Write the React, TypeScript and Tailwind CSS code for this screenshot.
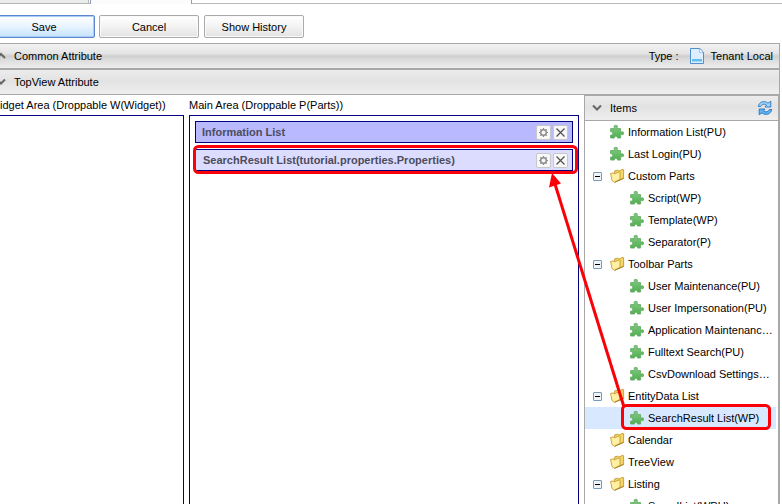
import React from "react";

type Row = { label: string; level: 1 | 2; kind: "part" | "folder"; open?: boolean; selected?: boolean };

const rows: Row[] = [
  { label: "Information List(PU)", level: 1, kind: "part" },
  { label: "Last Login(PU)", level: 1, kind: "part" },
  { label: "Custom Parts", level: 1, kind: "folder", open: true },
  { label: "Script(WP)", level: 2, kind: "part" },
  { label: "Template(WP)", level: 2, kind: "part" },
  { label: "Separator(P)", level: 2, kind: "part" },
  { label: "Toolbar Parts", level: 1, kind: "folder", open: true },
  { label: "User Maintenance(PU)", level: 2, kind: "part" },
  { label: "User Impersonation(PU)", level: 2, kind: "part" },
  { label: "Application Maintenanc…", level: 2, kind: "part" },
  { label: "Fulltext Search(PU)", level: 2, kind: "part" },
  { label: "CsvDownload Settings…", level: 2, kind: "part" },
  { label: "EntityData List", level: 1, kind: "folder", open: true },
  { label: "SearchResult List(WP)", level: 2, kind: "part", selected: true },
  { label: "Calendar", level: 1, kind: "folder" },
  { label: "TreeView", level: 1, kind: "folder" },
  { label: "Listing", level: 1, kind: "folder", open: true },
  { label: "SavedList(WPU)", level: 2, kind: "part" },
];

function Label({ text, bold }: { text: string; bold?: boolean }) {
  return <span className={"shrink-0 whitespace-nowrap " + (bold ? "font-bold text-[#4c4c5c]" : "")}>{text}</span>;
}

function Puzzle() {
  return (
    <svg width="16" height="16" viewBox="0 0 16 16" className="shrink-0">
      <defs>
        <linearGradient id="pz" x1="0" y1="0" x2="0" y2="1">
          <stop offset="0" stopColor="#86cb85" />
          <stop offset="1" stopColor="#4fae50" />
        </linearGradient>
      </defs>
      <path
        d="M.6 4.6H4.3V3.6Q3.3 1.3 5.7 1.3T7.2 3.6V4.6H10.6V8H11.5Q13.6 7.2 13.6 9.2T11.5 10.6H10.6V14H7.4V13.1Q7.2 12.2 5.9 12.2T4.5 13.1V14H.6V11.1H1.6Q2.7 10.7 2.7 9.4T1.6 7.7H.6Z"
        fill="url(#pz)"
        stroke="#65ad67"
        strokeWidth=".9"
      />
    </svg>
  );
}

function Folder() {
  return (
    <svg width="16" height="16" viewBox="0 0 16 16" className="shrink-0">
      <path d="M4.4 4.6L4.8 2.8 7.8 2.2 8.8 3.1 13 1.2 13.6 1.8V10.4L5 14Z" fill="#f3d568" stroke="#c3982e" strokeWidth=".9" />
      <path d="M.6 5.4L3.2 5 4.2 5.8 9.6 3.8 10 4.3V11.2L4.6 14.3 2 12.6Z" fill="#fff0a2" stroke="#c69c35" strokeWidth=".9" />
      <path d="M4.6 14.3L13.6 10.4" fill="none" stroke="#a87d22" strokeWidth=".9" />
    </svg>
  );
}

function Toggle() {
  return (
    <svg width="9" height="9" className="shrink-0">
      <rect x=".5" y=".5" width="8" height="8" rx=".5" fill="#edf5fa" stroke="#789bb3" />
      <path d="M2 4.5H7" stroke="#000" />
    </svg>
  );
}

function Chevron({ up }: { up?: boolean }) {
  return (
    <svg width="10" height="8" viewBox="0 0 10 8" className="shrink-0">
      <path d={up ? "M1 6L5 2L9 6" : "M1 1.5L5 5.5L9 1.5"} stroke="#666" strokeWidth="2" fill="none" />
    </svg>
  );
}

function Refresh() {
  return (
    <svg width="16" height="16" viewBox="0 0 16 16" className="shrink-0">
      <path d="M1.3 6.5C2 1.6 7.5.2 11 3.2L13.8 1.2V7H8L9.5 5C6.8 3.4 4.8 4.5 3.6 6.5Z" fill="#9bd0f8" stroke="#2c78bd" strokeWidth=".9" />
      <path d="M14.7 9.5C14 14.4 8.5 15.8 5 12.8L2.2 14.8V9H8L6.5 11C9.2 12.6 11.2 11.5 12.4 9.5Z" fill="#5fb4f2" stroke="#2272bd" strokeWidth=".9" />
    </svg>
  );
}

function Doc() {
  return (
    <svg width="14" height="16" viewBox="0 0 14 16" className="shrink-0">
      <path d="M.5.5H9.8L13.5 4.2V15.5H.5Z" fill="#dceeff" stroke="#4d8fd0" />
      <path d="M9.5 1V4.5H13" fill="#fff" stroke="#9dc4e8" />
      <rect x="2" y="11" width="10" height="2.5" fill="#62bdf0" />
    </svg>
  );
}

function ToolButton({ kind }: { kind: "gear" | "close" }) {
  return (
    <span className="flex h-[15px] w-[15px] items-center justify-center rounded-[2px] border border-[#c8c8c8] bg-[#f8f8f8]">
      <svg width="11" height="11" viewBox="0 0 11 11" className="shrink-0">
        {kind === "gear" ? (
          <g stroke="#8d8d8d" fill="none">
            <circle cx="5.5" cy="5.5" r="2.8" strokeWidth="1.5" />
            <path d="M5.5 1V3M5.5 8V10M1 5.5H3M8 5.5H10M2.3 2.3L3.5 3.5M7.5 7.5L8.7 8.7M8.7 2.3L7.5 3.5M3.5 7.5L2.3 8.7" strokeWidth="1.2" />
          </g>
        ) : (
          <path d="M1.5 1.5L9.5 9.5M9.5 1.5L1.5 9.5" stroke="#505050" strokeWidth="1.2" />
        )}
      </svg>
    </span>
  );
}

function Part({ text, className }: { text: string; className: string }) {
  return (
    <div className={"flex h-[22px] items-center border border-[#000080] pr-[4px] " + className}>
      <Label text={text} bold />
      <div className="ml-auto flex gap-[2px]">
        <ToolButton kind="gear" />
        <ToolButton kind="close" />
      </div>
    </div>
  );
}

const barFill = "bg-[linear-gradient(#f3f3f3_0%,#e4e4e4_40%,#cfcfcf_50%,#dedede_70%,#ededed_100%)]";
const softFill = "bg-[linear-gradient(#ececec_0%,#e2e2e2_45%,#e9e9e9_75%,#eeeeee_100%)]";
const button =
  "flex h-[23px] items-center justify-center rounded-[2px] border border-[#aaa] bg-[linear-gradient(#fff,#f3f3f3_50%,#e2e2e2)] shadow-[inset_0_0_0_1px_#fafafa]";

export default function App() {
  return (
    <div className="relative flex h-[504px] w-[782px] flex-col overflow-hidden bg-white font-['Liberation_Sans',Arial,sans-serif] text-[11px] leading-4 text-black">
      <div className="flex h-1 shrink-0">
        <div className="w-[89px] border-r border-b border-r-[#b5b5b5] border-b-[#b5b5b5] bg-[#ececec]" />
        <div className="w-px border-b border-[#b5b5b5]" />
        <div className="w-[102px] border-x border-[#8f9dbd] bg-[#fcfcfc]" />
        <div className="flex-1 border-b border-[#b9b9b9]" />
      </div>

      <div className="flex h-[39px] shrink-0 pt-[11px]">
        <div className="-ml-1 mr-[4px] flex h-[23px] w-[99px] items-center justify-center rounded-[2px] border border-[#5c87cf] bg-[linear-gradient(#fff,#e8f4ff_50%,#c6e2fc)] pr-[3px] shadow-[inset_0_0_0_1px_#a9cdf5]">
          <Label text="Save" />
        </div>
        <div className={button + " mr-[5px] w-[100px]"}>
          <Label text="Cancel" />
        </div>
        <div className={button + " w-[100px]"}>
          <Label text="Show History" />
        </div>
      </div>

      <div className="flex min-h-0 w-[780px] flex-1 flex-col border-t border-r border-[#a8a8a8]">
        <div className={"flex h-[26px] shrink-0 items-center border-b-2 border-[#a8a8a8] pr-[6px] " + barFill}>
          <div className="-ml-[4px] mr-[8px]"><Chevron up /></div>
          <Label text="Common Attribute" />
          <div className="ml-auto flex items-center">
            <Label text="Type :" />
            <div className="mr-[7px] ml-[11px]"><Doc /></div>
            <Label text="Tenant Local" />
          </div>
        </div>
        <div className={"flex h-[25px] shrink-0 items-center border-b border-[#a8a8a8] " + softFill}>
          <div className="-ml-[4px] mr-[8px]"><Chevron /></div>
          <Label text="TopView Attribute" />
        </div>

        <div className="flex min-h-0 flex-1">
          <div className="flex w-[184px] shrink-0 flex-col">
            <div className="flex h-5 shrink-0 items-center">
              <Label text="idget Area (Droppable W(Widget))" />
            </div>
            <div className="flex-1 border-t border-r border-[#000080]" />
          </div>
          <div className="ml-[5px] flex w-[390px] shrink-0 flex-col">
            <div className="flex h-5 shrink-0 items-center">
              <Label text="Main Area (Droppable P(Parts))" />
            </div>
            <div className="flex flex-1 flex-col gap-[6px] border-x border-t border-[#000080] px-[5px] pt-[5px]">
              <Part text="Information List" className="bg-[#b9b9ff] pl-[6px]" />
              <Part text="SearchResult List(tutorial.properties.Properties)" className="bg-[#dcdcff] pl-[7px]" />
            </div>
          </div>
          <div className="ml-[5px] flex w-[195px] shrink-0 flex-col border-t border-r border-l border-[#a8a8a8]">
            <div className={"flex h-[25px] shrink-0 items-center border-b border-[#a8a8a8] pr-[5px] pl-[7px] " + softFill}>
              <Chevron />
              <div className="ml-[8px] flex"><Label text="Items" /></div>
              <div className="ml-auto"><Refresh /></div>
            </div>
            <div className="min-h-0 flex-1 overflow-hidden">
              {rows.map((r) => (
                <div key={r.label} className={"mr-[2px] flex h-[22px] items-center " + (r.selected ? "bg-[#d7e8ff]" : "")}>
                  <div className={"flex shrink-0 items-center pl-[8px] " + (r.level === 1 ? "w-[25px]" : "w-[45px]")}>
                    {r.open && <Toggle />}
                  </div>
                  {r.kind === "part" ? <Puzzle /> : <Folder />}
                  <div className="ml-[2px] flex"><Label text={r.label} /></div>
                </div>
              ))}
            </div>
          </div>
        </div>
      </div>

      <svg width="782" height="504" className="pointer-events-none absolute inset-0">
        <g fill="none" stroke="#fb0007" strokeWidth="3">
          <rect x="194.5" y="146.5" width="382" height="26" rx="4" />
          <rect x="622.5" y="405.5" width="147" height="23" rx="4" />
          <path d="M624 407L555 184" />
        </g>
        <path d="M552 173L561 183.5L549 187.5Z" fill="#fb0007" />
      </svg>
    </div>
  );
}
